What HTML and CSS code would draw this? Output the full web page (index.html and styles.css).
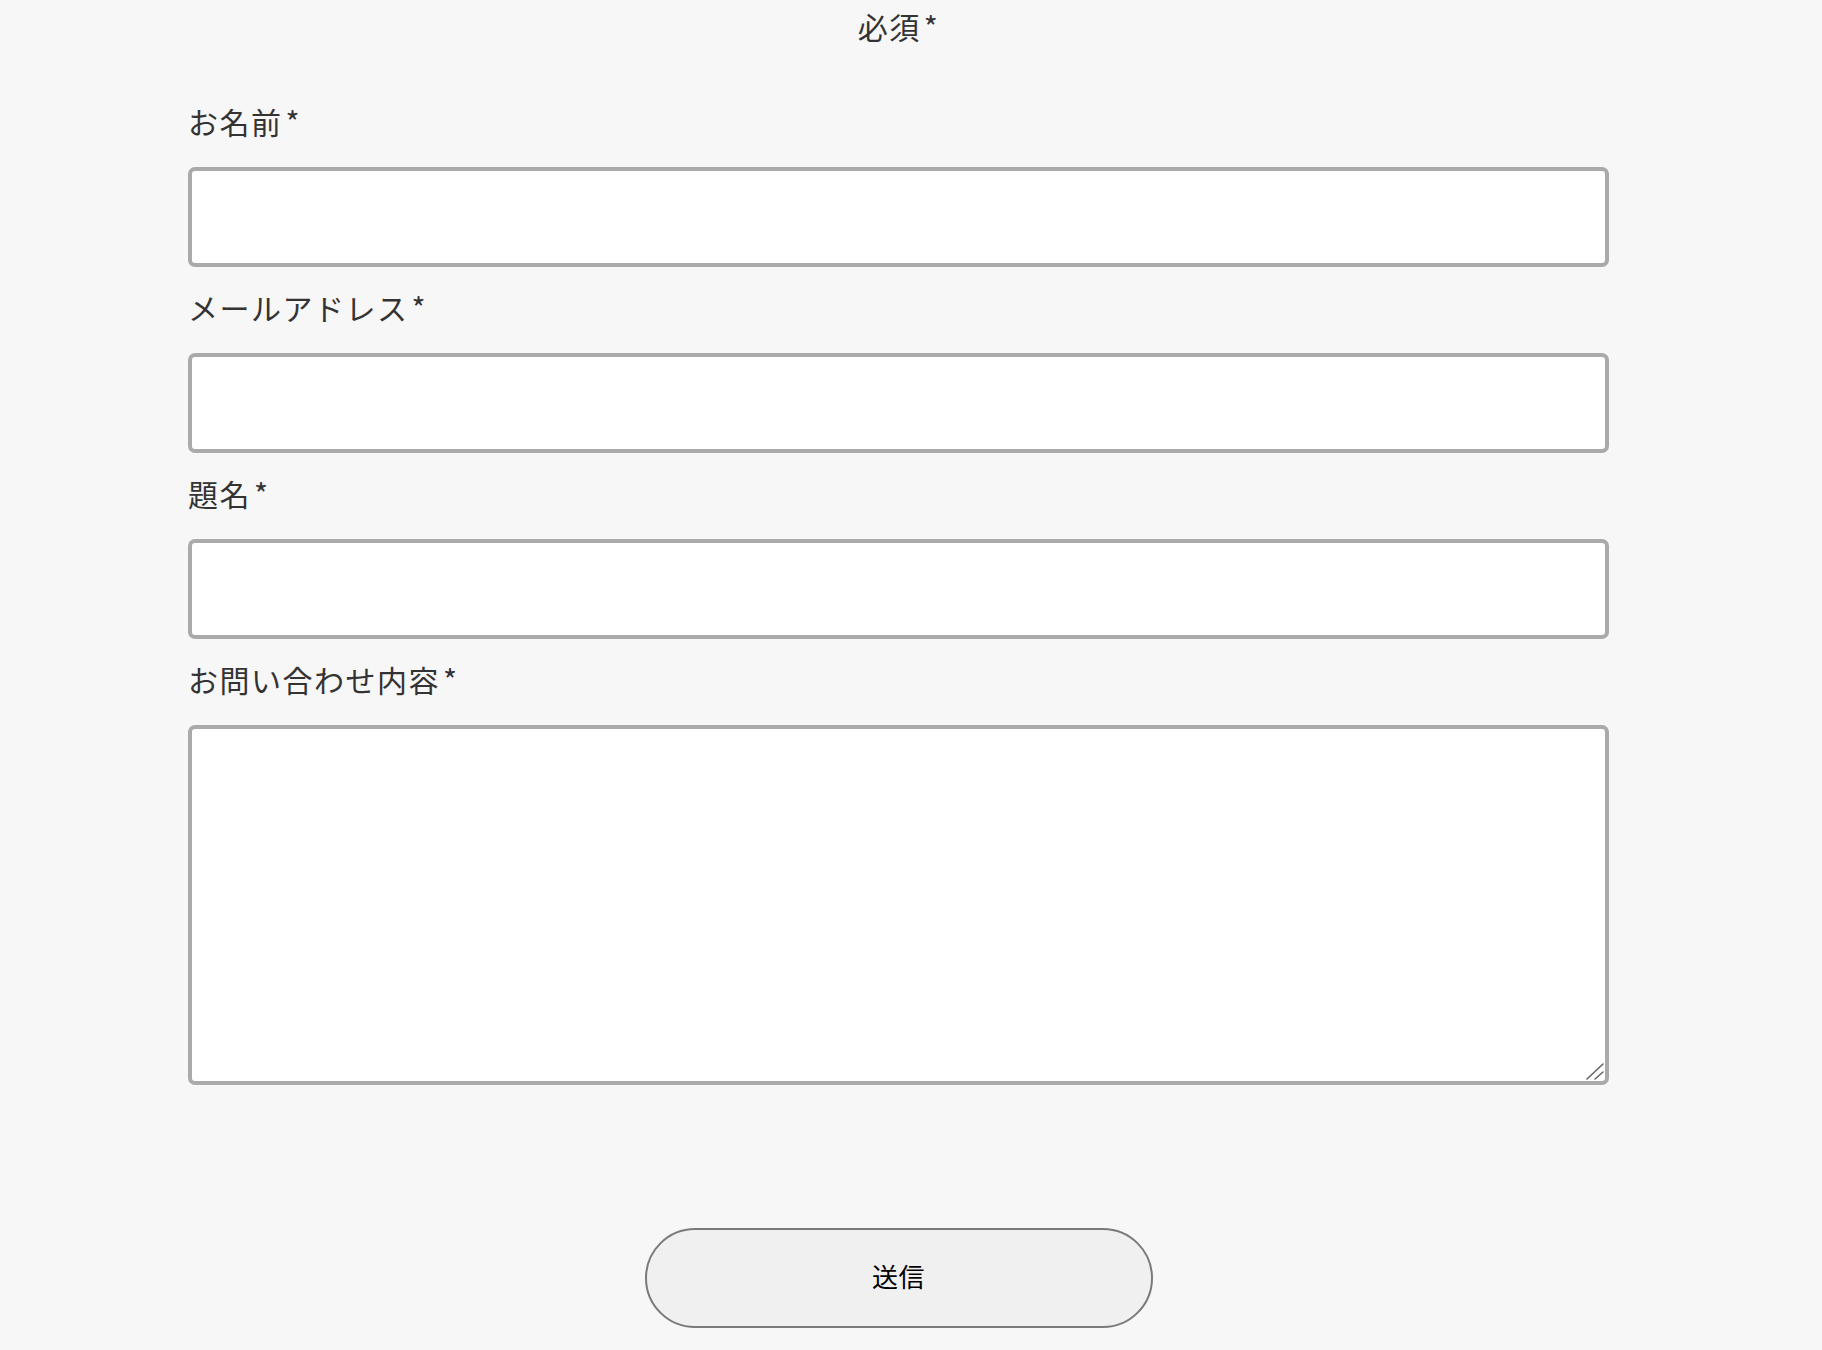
FILE: index.html
```html
<!DOCTYPE html>
<html lang="ja">
<head>
<meta charset="utf-8">
<title>お問い合わせ</title>
<link rel="stylesheet" href="styles.css">
</head>
<body>
<form class="form">
  <p class="required-note">必須<span class="req">*</span></p>
  <div class="field">
    <label class="label">お名前<span class="req">*</span></label>
    <input class="input" type="text">
  </div>
  <div class="field">
    <label class="label">メールアドレス<span class="req">*</span></label>
    <input class="input" type="email">
  </div>
  <div class="field">
    <label class="label">題名<span class="req">*</span></label>
    <input class="input" type="text">
  </div>
  <div class="field">
    <label class="label">お問い合わせ内容<span class="req">*</span></label>
    <div class="textarea-wrap">
      <textarea class="textarea"></textarea>
      <svg class="grip" width="20" height="20" viewBox="0 0 20 20" aria-hidden="true">
        <line x1="2" y1="18" x2="18" y2="3" stroke="#666" stroke-width="1.6" stroke-linecap="round"/>
        <line x1="10" y1="18" x2="18" y2="11" stroke="#666" stroke-width="1.6" stroke-linecap="round"/>
      </svg>
    </div>
  </div>
  <div class="actions">
    <button class="submit" type="button">送信</button>
  </div>
</form>
</body>
</html>
```

FILE: styles.css
```css
html, body {
  margin: 0;
  padding: 0;
  background: #f7f7f7;
}
body {
  font-family: "Noto Sans CJK JP", "Noto Sans", sans-serif;
  color: #333;
}
.form {
  width: 1421px;
  margin-left: 188px;
  display: flex;
  flex-direction: column;
}
.required-note {
  margin: 6px 0 0;
  font-size: 30px;
  line-height: 40px;
  letter-spacing: 1.5px;
  text-align: center;
}
.req {
  margin-left: 3px;
}
.field {
  display: flex;
  flex-direction: column;
  gap: 26px;
  margin-top: 20px;
}
.field:first-of-type {
  margin-top: 55px;
}
.label {
  font-size: 30px;
  line-height: 40px;
  letter-spacing: 1.5px;
}
.input, .textarea {
  box-sizing: border-box;
  width: 100%;
  margin: 0;
  background: #fff;
  border: 4px solid #aaa;
  border-radius: 7px;
  font-family: inherit;
  font-size: 20px;
  outline: none;
}
.input {
  height: 100px;
}
.textarea-wrap {
  position: relative;
}
.textarea {
  height: 360px;
  display: block;
  resize: none;
}
.grip {
  position: absolute;
  right: 4px;
  bottom: 4px;
}
.actions {
  display: flex;
  justify-content: center;
  margin-top: 143px;
}
.submit {
  box-sizing: border-box;
  width: 508px;
  height: 100px;
  padding: 0 0 6px;
  background: #f0f0f0;
  border: 2px solid #7a7a7a;
  border-radius: 50px;
  font-family: "Noto Sans CJK JP", sans-serif;
  font-size: 26px;
  color: #000;
  letter-spacing: 0.02em;
}
```
